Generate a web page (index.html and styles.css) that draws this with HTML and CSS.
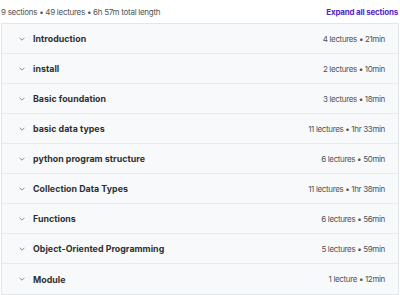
FILE: index.html
```html
<!DOCTYPE html>
<html lang="en">
<head>
  <meta charset="UTF-8" />
  <title>Course content</title>
  <link rel="stylesheet" href="styles.css">
</head>
<body>
<div class="content">
  <div class="summary">
    <span class="summary-text">9 sections • 49 lectures • 6h 57m total length</span>
    <button class="expand-all">Expand all sections</button>
  </div>

  <div class="sections">
    <div class="section-row">
      <div class="section-title"><span class="chevron"><svg viewBox="0 0 10 6" width="6" height="4"><path d="M1 1l4 4 4-4" fill="none" stroke="#6a6f73" stroke-width="1.3"/></svg></span>Introduction</div>
      <div class="section-meta">4 lectures • 21min</div>
    </div>
    <div class="section-row">
      <div class="section-title"><span class="chevron"><svg viewBox="0 0 10 6" width="6" height="4"><path d="M1 1l4 4 4-4" fill="none" stroke="#6a6f73" stroke-width="1.3"/></svg></span>install</div>
      <div class="section-meta">2 lectures • 10min</div>
    </div>
    <div class="section-row">
      <div class="section-title"><span class="chevron"><svg viewBox="0 0 10 6" width="6" height="4"><path d="M1 1l4 4 4-4" fill="none" stroke="#6a6f73" stroke-width="1.3"/></svg></span>Basic foundation</div>
      <div class="section-meta">3 lectures • 18min</div>
    </div>
    <div class="section-row">
      <div class="section-title"><span class="chevron"><svg viewBox="0 0 10 6" width="6" height="4"><path d="M1 1l4 4 4-4" fill="none" stroke="#6a6f73" stroke-width="1.3"/></svg></span>basic data types</div>
      <div class="section-meta">11 lectures • 1hr 33min</div>
    </div>
    <div class="section-row">
      <div class="section-title"><span class="chevron"><svg viewBox="0 0 10 6" width="6" height="4"><path d="M1 1l4 4 4-4" fill="none" stroke="#6a6f73" stroke-width="1.3"/></svg></span>python program structure</div>
      <div class="section-meta">6 lectures • 50min</div>
    </div>
    <div class="section-row">
      <div class="section-title"><span class="chevron"><svg viewBox="0 0 10 6" width="6" height="4"><path d="M1 1l4 4 4-4" fill="none" stroke="#6a6f73" stroke-width="1.3"/></svg></span>Collection Data Types</div>
      <div class="section-meta">11 lectures • 1hr 38min</div>
    </div>
    <div class="section-row">
      <div class="section-title"><span class="chevron"><svg viewBox="0 0 10 6" width="6" height="4"><path d="M1 1l4 4 4-4" fill="none" stroke="#6a6f73" stroke-width="1.3"/></svg></span>Functions</div>
      <div class="section-meta">6 lectures • 56min</div>
    </div>
    <div class="section-row">
      <div class="section-title"><span class="chevron"><svg viewBox="0 0 10 6" width="6" height="4"><path d="M1 1l4 4 4-4" fill="none" stroke="#6a6f73" stroke-width="1.3"/></svg></span>Object-Oriented Programming</div>
      <div class="section-meta">5 lectures • 59min</div>
    </div>
    <div class="section-row">
      <div class="section-title"><span class="chevron"><svg viewBox="0 0 10 6" width="6" height="4"><path d="M1 1l4 4 4-4" fill="none" stroke="#6a6f73" stroke-width="1.3"/></svg></span>Module</div>
      <div class="section-meta">1 lecture • 12min</div>
    </div>
  </div>
</div>
</body>
</html>
```

FILE: styles.css
```css
* { box-sizing: border-box; margin: 0; padding: 0; }
body {
  font-family: Inter, "Noto Sans", sans-serif;
  background: #fff;
  color: #2d2f31;
}
.content {
  width: 400px;
}
.summary {
  display: flex;
  justify-content: space-between;
  align-items: center;
  height: 23px;
  padding: 0 2px 0 1px;
}
.summary-text {
  font-size: 8px;
  letter-spacing: -0.28px;
  color: #4f5356;
}
.expand-all {
  background: none;
  border: none;
  font-family: inherit;
  font-size: 8px;
  font-weight: 700;
  letter-spacing: -0.2px;
  color: #5624d0;
  cursor: pointer;
}
.sections {
  margin-left: 1px;
  margin-right: 1px;
  border: 1px solid #e4e7ea;
}
.section-row {
  display: flex;
  justify-content: space-between;
  align-items: center;
  height: 30px;
  padding: 0 13px 0 17px;
  background: #f7f9fa;
  border-bottom: 1px solid #e8eaed;
}
.section-row:last-child {
  border-bottom: none;
}
.section-title {
  display: flex;
  align-items: center;
  font-size: 8.8px;
  font-weight: 700;
  letter-spacing: 0.05px;
}
.chevron {
  display: flex;
  width: 14px;
}
.section-meta {
  font-size: 8px;
  letter-spacing: -0.35px;
  color: #4f5356;
}
```
